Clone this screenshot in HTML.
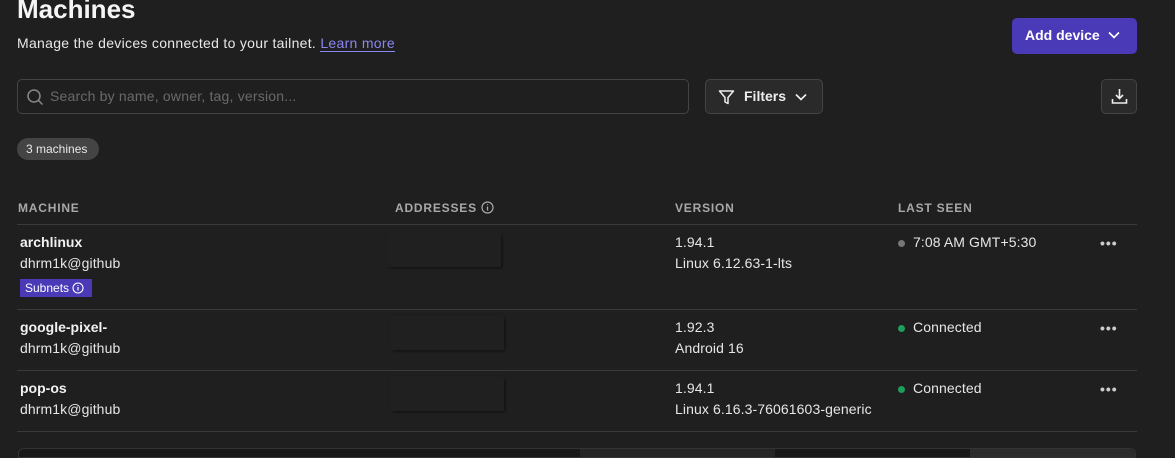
<!DOCTYPE html>
<html><head><style>
*{margin:0;padding:0;box-sizing:border-box}
body{width:1175px;height:455px;background:#1f1f1f;font-family:"Liberation Sans",sans-serif;color:#e8e8e8;position:relative;overflow:hidden}
.a{position:absolute;white-space:nowrap}
.h{font-size:12px;font-weight:bold;letter-spacing:.8px;color:#a8a8a8}
.line{position:absolute;left:17px;width:1120px;height:1px;background:#3a3a3a}
.b{font-weight:bold;font-size:14px;color:#f2f2f2}
.t{font-size:14px;color:#e6e6e6;letter-spacing:.1px}
.blur{position:absolute;width:112px;height:32px;background:#202020;box-shadow:1px 1px 2px #111, -1px -1px 2px #262626}
.dot{position:absolute;width:7px;height:7px;border-radius:50%}
.dots{position:absolute;font-size:14px;font-weight:bold;color:#ccc;letter-spacing:1px}
</style></head><body>
<div class="a" style="left:17px;top:-6px;font-size:26px;font-weight:bold;color:#f5f5f5">Machines</div>
<div class="a" style="left:17px;top:35px;font-size:14px;color:#e8e8e8;letter-spacing:.3px">Manage the devices connected to your tailnet. <span style="color:#8b86f0;border-bottom:1px solid #8b86f0">Learn more</span></div>
<div class="a" style="left:1012px;top:18px;width:125px;height:36px;background:#4a3ab8;border-radius:5px;color:#fff;font-size:14px;font-weight:bold;padding:9px 0 0 13px">Add device
<svg style="position:absolute;left:96px;top:13px" width="12" height="8" viewBox="0 0 12 8"><path d="M1 1.5l5 5 5-5" stroke="#fff" stroke-width="1.6" fill="none"/></svg></div>
<div class="a" style="left:17px;top:79px;width:672px;height:35px;border:1px solid #444;border-radius:5px;background:#1f1f1f">
<svg style="position:absolute;left:8px;top:8px" width="18" height="18" viewBox="0 0 18 18"><circle cx="8" cy="8" r="6" stroke="#888" stroke-width="1.5" fill="none"/><path d="M12.5 12.5l4 4" stroke="#888" stroke-width="1.5"/></svg>
<span style="position:absolute;left:32px;top:8px;font-size:14px;color:#6a6a6a;letter-spacing:.2px">Search by name, owner, tag, version...</span></div>
<div class="a" style="left:705px;top:79px;width:118px;height:35px;border:1px solid #444;border-radius:5px;background:#2a2a2a;font-size:14px;font-weight:bold;color:#eee">
<svg style="position:absolute;left:12px;top:9px" width="17" height="17" viewBox="0 0 17 17"><path d="M1.5 2h14l-5.5 6.5v6l-3-1.5v-4.5z" stroke="#eee" stroke-width="1.5" fill="none" stroke-linejoin="round"/></svg>
<span style="position:absolute;left:38px;top:8px">Filters</span>
<svg style="position:absolute;left:89px;top:13px" width="12" height="8" viewBox="0 0 12 8"><path d="M1 1.5l5 5 5-5" stroke="#eee" stroke-width="1.6" fill="none"/></svg></div>
<div class="a" style="left:1101px;top:79px;width:36px;height:35px;border:1px solid #444;border-radius:5px;background:#2a2a2a">
<svg style="position:absolute;left:9px;top:8px" width="17" height="17" viewBox="0 0 17 17"><path d="M8.5 1v9M5 7l3.5 3.5L12 7M1.5 11v4h14v-4" stroke="#eee" stroke-width="1.6" fill="none"/></svg></div>
<div class="a" style="left:17px;top:138px;width:82px;height:22px;border-radius:11px;background:#444;font-size:12px;color:#e8e8e8;padding:4px 0 0 9px">3 machines</div>
<div class="a h" style="left:18px;top:201px">MACHINE</div>
<div class="a h" style="left:395px;top:201px">ADDRESSES <svg style="vertical-align:-2px" width="13" height="13" viewBox="0 0 13 13"><circle cx="6.5" cy="6.5" r="5.5" stroke="#aaa" stroke-width="1.2" fill="none"/><path d="M6.5 5.5v4M6.5 3.3v.8" stroke="#aaa" stroke-width="1.3"/></svg></div>
<div class="a h" style="left:675px;top:201px">VERSION</div>
<div class="a h" style="left:898px;top:201px">LAST SEEN</div>
<div class="line" style="top:224px"></div>
<div class="line" style="top:309px"></div>
<div class="line" style="top:370px"></div>
<div class="line" style="top:431px"></div>

<div class="a b" style="left:20px;top:234px">archlinux</div>
<div class="a t" style="left:20px;top:255px">dhrm1k@github</div>
<div class="a" style="left:20px;top:279px;width:72px;height:18px;background:#4a3ab8;font-size:12px;color:#fff;padding:2px 0 0 5px">Subnets <svg style="vertical-align:-2px" width="12" height="12" viewBox="0 0 12 12"><circle cx="6" cy="6" r="5" stroke="#fff" stroke-width="1.1" fill="none"/><path d="M6 5v3.5M6 3v.8" stroke="#fff" stroke-width="1.2"/></svg></div>
<div class="blur" style="left:389px;top:235px"></div>
<div class="a t" style="left:675px;top:234px">1.94.1</div>
<div class="a t" style="left:675px;top:255px">Linux 6.12.63-1-lts</div>
<div class="dot" style="left:898px;top:240px;background:#777"></div>
<div class="a t" style="left:913px;top:234px">7:08 AM GMT+5:30</div>
<div class="dots" style="left:1100px;top:235px">•••</div>

<div class="a b" style="left:20px;top:319px">google-pixel-</div>
<div class="a t" style="left:20px;top:340px">dhrm1k@github</div>
<div class="blur" style="left:392px;top:318px"></div>
<div class="a t" style="left:675px;top:319px">1.92.3</div>
<div class="a t" style="left:675px;top:340px">Android 16</div>
<div class="dot" style="left:898px;top:325px;background:#1f9d5c"></div>
<div class="a t" style="left:913px;top:319px">Connected</div>
<div class="dots" style="left:1100px;top:320px">•••</div>

<div class="a b" style="left:20px;top:380px">pop-os</div>
<div class="a t" style="left:20px;top:401px">dhrm1k@github</div>
<div class="blur" style="left:392px;top:379px"></div>
<div class="a t" style="left:675px;top:380px">1.94.1</div>
<div class="a t" style="left:675px;top:401px">Linux 6.16.3-76061603-generic</div>
<div class="dot" style="left:898px;top:386px;background:#1f9d5c"></div>
<div class="a t" style="left:913px;top:380px">Connected</div>
<div class="dots" style="left:1100px;top:381px">•••</div>

<div class="a" style="left:18px;top:448px;width:1118px;height:10px;border-radius:6px 6px 0 0;background:#181818;border:1px solid #333"></div>
<div class="a" style="left:580px;top:449px;width:195px;height:8px;background:#262626"></div>
<div class="a" style="left:970px;top:449px;width:165px;height:8px;background:#2c2c2c"></div>
</body></html>
